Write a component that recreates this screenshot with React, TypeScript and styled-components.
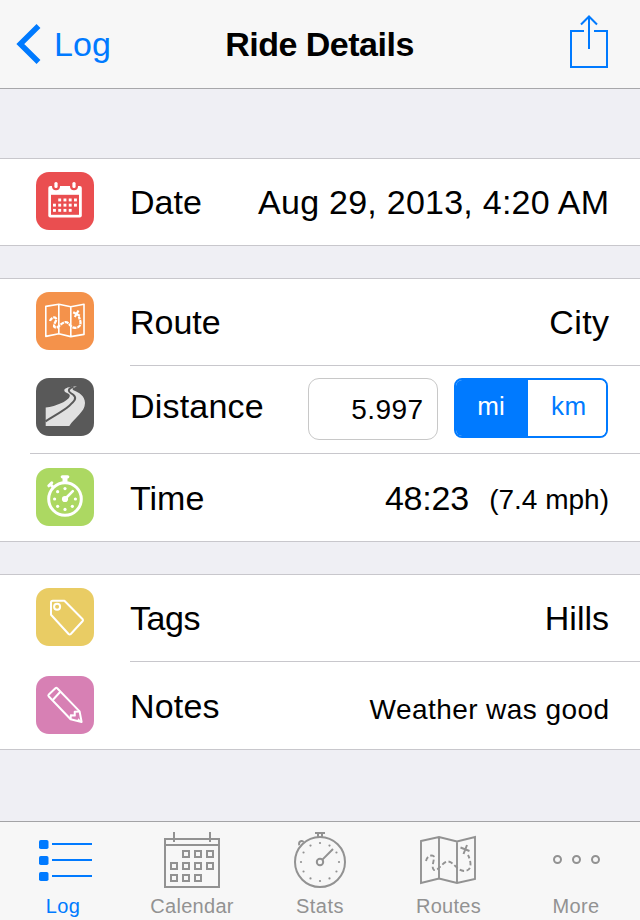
import React from 'react';
import styled, { createGlobalStyle } from 'styled-components';

const blue = '#007aff';
const grey = '#929292';

const GlobalStyle = createGlobalStyle`
  * { box-sizing: border-box; }
  body { margin: 0; background: #efeff4; }
  button { font: inherit; border: 0; padding: 0; background: none; }
`;

const Screen = styled.div`
  width: 640px;
  height: 920px;
  display: flex;
  flex-direction: column;
  background: #efeff4;
  color: #000;
  font-family: 'Liberation Sans', Arial, sans-serif;
  overflow: hidden;
`;

const NavBar = styled.header`
  height: 89px;
  flex: none;
  display: grid;
  grid-template-columns: 1fr auto 1fr;
  align-items: center;
  padding: 0 31px 0 16px;
  background: #f7f7f7;
  border-bottom: 1px solid #a7a7aa;
`;

const BackButton = styled.button`
  display: flex;
  align-items: center;
  gap: 13px;
  color: ${blue};
`;

const Title = styled.h1`
  margin: 0 0 0 14px;
  font-size: 34px;
  line-height: 40px;
  font-weight: 700;
  letter-spacing: -0.5px;
`;

const ShareButton = styled.button`
  justify-self: end;
  height: 56px;
  margin-top: -4px;
`;

const Content = styled.main`
  flex: 1;
  display: flex;
  flex-direction: column;
  gap: 32px;
  padding-top: 69px;
`;

const Group = styled.section`
  background: #fff;
  border-top: 1px solid #c8c7cc;
  border-bottom: 1px solid #c8c7cc;
`;

const Row = styled.div<{ $h?: number }>`
  display: flex;
  align-items: center;
  height: ${p => p.$h ?? 86}px;
  padding: 0 31px 0 36px;
`;

const Separator = styled.div<{ $inset: number }>`
  height: 1px;
  margin-left: ${p => p.$inset}px;
  background: #c8c7cc;
`;

const Tile = styled.div<{ $color: string; $top?: number }>`
  width: 58px;
  height: 58px;
  flex: none;
  align-self: flex-start;
  margin: ${p => p.$top ?? 13}px 36px 0 0;
  border-radius: 13px;
  background: ${p => p.$color};
  svg { display: block; }
`;

const Text = styled.span<{ $size?: number; $track?: number; $shift?: number }>`
  font-size: ${p => p.$size ?? 34}px;
  line-height: 40px;
  letter-spacing: ${p => p.$track ?? 0}px;
  margin-top: ${p => p.$shift ?? 0}px;
  margin-right: ${p => -(p.$track ?? 0)}px;
  white-space: nowrap;
`;

const Spacer = styled.div`
  flex: 1;
`;

const TimeValue = styled.div`
  display: flex;
  align-items: center;
  gap: 20px;
`;

const DistanceField = styled.div`
  width: 130px;
  height: 62px;
  display: flex;
  align-items: center;
  justify-content: flex-end;
  align-self: flex-start;
  margin: 12px 16px 0 0;
  padding-right: 14px;
  border: 1px solid #c8c8c8;
  border-radius: 11px;
`;

const Segments = styled.div`
  width: 154px;
  height: 60px;
  display: flex;
  align-self: flex-start;
  margin: 12px 1px 0 0;
  border: 2px solid ${blue};
  border-radius: 8px;
  overflow: hidden;
`;

const Segment = styled.button<{ $active?: boolean; $w: number }>`
  width: ${p => p.$w}px;
  display: flex;
  align-items: center;
  justify-content: center;
  padding: ${p => (p.$active ? '0 2px 0 0' : '0 0 0 3px')};
  color: ${p => (p.$active ? '#fff' : blue)};
  background: ${p => (p.$active ? blue : '#fff')};
`;

const TabBar = styled.nav`
  height: 99px;
  flex: none;
  display: grid;
  grid-template-columns: repeat(5, 1fr);
  background: #f7f7f7;
  border-top: 1px solid #a3a3a6;
`;

const Tab = styled.button<{ $active?: boolean }>`
  display: flex;
  flex-direction: column;
  align-items: center;
  padding-top: 6px;
  color: ${p => (p.$active ? blue : grey)};
`;

const TabLabel = styled.span<{ $track?: number; $left?: number }>`
  font-size: 20px;
  line-height: 24px;
  margin-top: 2px;
  margin-left: ${p => p.$left ?? 0}px;
  letter-spacing: ${p => p.$track ?? 0.3}px;
`;

const ticks = (n: number, cx: number, cy: number, r: number) =>
  Array.from({ length: n }, (_, i) => {
    const a = (i * 2 * Math.PI) / n;
    return [cx + r * Math.sin(a), cy - r * Math.cos(a)];
  });

const Glyph = ({ children }: { children: React.ReactNode }) => (
  <svg width="58" height="58" viewBox="0 0 58 58" fill="none">{children}</svg>
);

const DateGlyph = () => (
  <Glyph>
    <rect x="12.3" y="14" width="33.5" height="31.5" rx="2" fill="#fff" />
    <path d="M15 22.8h28v20H15z" fill="#ea4e50" />
    {[20, 38].map(x => (
      <g key={x}>
        <circle cx={x} cy="14.2" r="4" fill="#ea4e50" />
        <rect x={x - 1.6} y="10" width="3.2" height="6" rx="1.5" fill="#fff" />
      </g>
    ))}
    {[[1, 5], [0, 5], [0, 4]].map(([from, to], r) =>
      Array.from({ length: to - from }, (_, i) => (
        <rect key={`${r}-${i}`} x={17 + (from + i) * 5.25} y={26.5 + r * 5.2} width="2.9" height="2.9" fill="#fff" />
      )),
    )}
  </Glyph>
);

const RouteGlyph = () => (
  <Glyph>
    <g stroke="#fff" strokeLinejoin="round">
      <path d="M9.8 14.4 22.8 12.2 34.8 14.8 48 12.2V42.4L34.8 44.6 22.8 41.8 9.8 44.4ZM22.8 12.2V41.8M34.8 14.8V44.6" strokeWidth="1.6" />
      <path d="M14 29C15 25.5 19.5 24 20.3 27.2C20.5 30 16 33 19 35.3C22 37 24.5 31 29 30.2C33 29.7 33.5 34 37 35.3C42 37 45.5 34 44.3 29L42.8 24.5" strokeWidth="2.3" strokeDasharray="4 0.8" />
      <path d="M37.2 20.2 43.8 23.8M42.5 18.5 38.8 25" strokeWidth="2.2" />
    </g>
  </Glyph>
);

const RoadGlyph = () => (
  <Glyph>
    <path d="M9.7 29.5C20 28.5 33.8 22.5 33.8 17.5C33.8 15.2 28.3 15.2 28.3 12.6C28.3 10 33 8.8 41 8.6C36.6 9.8 35.4 11.2 38 12.5C42.5 14.5 49 17.5 49 25C49 34 39 39 33.3 48H9.7Z" fill="#e1e1e1" />
    <path d="M9.5 43.3C20 36.8 28 32.5 33 28C38 23.5 41.4 20.5 37.5 17C35 15 32.6 14.5 32.8 12.3C33 10.8 34.8 9.6 37.5 8.7" stroke="#595959" strokeWidth="2" />
  </Glyph>
);

const TimeGlyph = () => (
  <Glyph>
    <g stroke="#fff">
      <circle cx="29" cy="31" r="16.3" strokeWidth="3" />
      <path d="M29 9V15" strokeWidth="5" />
      <path d="M26.3 8.8H31.7" strokeWidth="3.3" strokeLinecap="round" />
      <path d="M14.5 16.5 18 20" strokeWidth="3" />
      <path d="M12.8 17.8 15.8 14.8" strokeWidth="3" strokeLinecap="round" />
      <path d="M29 31 36.8 23.2" strokeWidth="2.6" strokeLinecap="round" />
    </g>
    <circle cx="29" cy="31" r="3.1" fill="#fff" />
    {ticks(8, 29, 31, 10.4).map(([x, y], i) => i !== 1 && <circle key={i} cx={x} cy={y} r="1.6" fill="#fff" />)}
  </Glyph>
);

const TagGlyph = () => (
  <Glyph>
    <path d="M16.8 12.7H28.4L46.7 31.2Q47.4 32.2 46.7 33L34.8 46Q33.7 47 32.6 46L15 26.8V14.5Q15 12.7 16.8 12.7Z" stroke="#fff" strokeWidth="2" strokeLinejoin="round" />
    <circle cx="21.1" cy="18.7" r="3" stroke="#fff" strokeWidth="2" />
  </Glyph>
);

const NotesGlyph = () => (
  <Glyph>
    <g stroke="#fff" strokeWidth="2" strokeLinejoin="round">
      <path d="M12.6 20.2Q12 19.5 12.6 18.8L19.4 12.2Q20.3 11.4 21.2 12.2L43.6 35.4 45.6 46 34.6 43.3Z" />
      <path d="M17 23.7 24.3 15.8M34.6 43.3 34.8 39.3 38.8 39.6 38.7 35.8 43.6 35.4" />
    </g>
    <path d="M42.5 42.3 46.2 46.4 40.8 45Z" fill="#fff" />
  </Glyph>
);

const TabIcon = ({ index, children }: { index: number; children: React.ReactNode }) => (
  <svg width="64" height="64" viewBox={`${32 + index * 128} 828 64 64`} fill="none" stroke="currentColor" strokeWidth="2">
    {children}
  </svg>
);

const LogIcon = () => (
  <TabIcon index={0}>
    {[840, 856, 872].map(y => (
      <g key={y}>
        <rect x="39" y={y} width="9.5" height="9" rx="1.8" fill="currentColor" stroke="none" />
        <path d={`M52 ${y + 4}H92`} />
      </g>
    ))}
  </TabIcon>
);

const CalendarIcon = () => (
  <TabIcon index={1}>
    <path d="M165 839H219V887H165ZM165 845H219M174 832V842M210 832V842" />
    {[[1, 4], [0, 4], [0, 3]].map(([from, to], r) =>
      Array.from({ length: to - from }, (_, i) => (
        <rect key={`${r}-${i}`} x={171 + (from + i) * 12} y={851 + r * 12} width="6" height="6" />
      )),
    )}
  </TabIcon>
);

const StatsIcon = () => (
  <TabIcon index={2}>
    <circle cx="320" cy="862" r="25" />
    <path d="M315 833H325M318 833V837M322 833V837M322.4 859.6 333 849" />
    <path d="M299.6 845.2A2.5 2.5 0 1 1 303.6 842" />
    <circle cx="320" cy="862" r="3.2" />
    {ticks(12, 320, 862, 19).map(([x, y], i) => <circle key={i} cx={x} cy={y} r="1.1" fill="currentColor" stroke="none" />)}
  </TabIcon>
);

const RoutesIcon = () => (
  <TabIcon index={3}>
    <path d="M421 841 439 837 457 841.5 475 837V879L457 883 439 878.5 421 883ZM439 837V878.5M457 841.5V883" strokeWidth="1.9" />
    <path d="M426 861C427 855 434 854 434 857.5C434 861 431 868 434 870C439 871 442 862 448 861.5C454 862 456 870 464 871C473 871 471 861 468 855" strokeDasharray="4.5 2.5" strokeWidth="1.9" />
    <path d="M460.5 847.5 469.5 851M467 845 463.5 854" />
  </TabIcon>
);

const MoreIcon = () => (
  <TabIcon index={4}>
    {[557.5, 576.5, 595.5].map(x => <circle key={x} cx={x} cy="859.5" r="3.5" />)}
  </TabIcon>
);

export default function App() {
  return (
    <Screen>
      <GlobalStyle />
      <NavBar>
        <BackButton>
          <svg width="25" height="42" viewBox="0 0 25 42" fill="none">
            <path d="M22.5 3 4.3 21 22.5 39" stroke={blue} strokeWidth="5.5" />
          </svg>
          <Text $track={0.1}>Log</Text>
        </BackButton>
        <Title>Ride Details</Title>
        <ShareButton>
          <svg width="40" height="56" viewBox="569 14 40 56" fill="none" stroke={blue} strokeWidth="2">
            <path d="M584 31H571V67H607V31H594M589 49V17M581 24.5 589 16.5 597 24.5" />
          </svg>
        </ShareButton>
      </NavBar>
      <Content>
        <Group>
          <Row>
            <Tile $color="#ea4e50"><DateGlyph /></Tile>
            <Text>Date</Text>
            <Spacer />
            <Text $track={0.25}>Aug 29, 2013, 4:20 AM</Text>
          </Row>
        </Group>
        <Group>
          <Row>
            <Tile $color="#f4924b"><RouteGlyph /></Tile>
            <Text>Route</Text>
            <Spacer />
            <Text $track={0.4}>City</Text>
          </Row>
          <Separator $inset={130} />
          <Row $h={87}>
            <Tile $color="#595959" $top={12}><RoadGlyph /></Tile>
            <Text $shift={-7} $track={0.2}>Distance</Text>
            <Spacer />
            <DistanceField><Text $size={28} $track={0.4} $shift={1}>5.997</Text></DistanceField>
            <Segments>
              <Segment $active $w={72}><Text $size={26} $shift={-4}>mi</Text></Segment>
              <Segment $w={78}><Text $size={26} $shift={-4} $track={0.5}>km</Text></Segment>
            </Segments>
          </Row>
          <Separator $inset={30} />
          <Row $h={87}>
            <Tile $color="#acd862" $top={14}><TimeGlyph /></Tile>
            <Text>Time</Text>
            <Spacer />
            <TimeValue>
              <Text $track={-0.2}>48:23</Text>
              <Text $size={28} $shift={5}>(7.4 mph)</Text>
            </TimeValue>
          </Row>
        </Group>
        <Group>
          <Row>
            <Tile $color="#e9cc64"><TagGlyph /></Tile>
            <Text $track={-0.4}>Tags</Text>
            <Spacer />
            <Text>Hills</Text>
          </Row>
          <Separator $inset={130} />
          <Row $h={87}>
            <Tile $color="#d780b4" $top={14}><NotesGlyph /></Tile>
            <Text $track={0.2}>Notes</Text>
            <Spacer />
            <Text $size={28} $shift={8} $track={0.43}>Weather was good</Text>
          </Row>
        </Group>
      </Content>
      <TabBar>
        <Tab $active><LogIcon /><TabLabel $left={-2}>Log</TabLabel></Tab>
        <Tab><CalendarIcon /><TabLabel>Calendar</TabLabel></Tab>
        <Tab><StatsIcon /><TabLabel $track={0.5}>Stats</TabLabel></Tab>
        <Tab><RoutesIcon /><TabLabel $left={1}>Routes</TabLabel></Tab>
        <Tab><MoreIcon /><TabLabel>More</TabLabel></Tab>
      </TabBar>
    </Screen>
  );
}
